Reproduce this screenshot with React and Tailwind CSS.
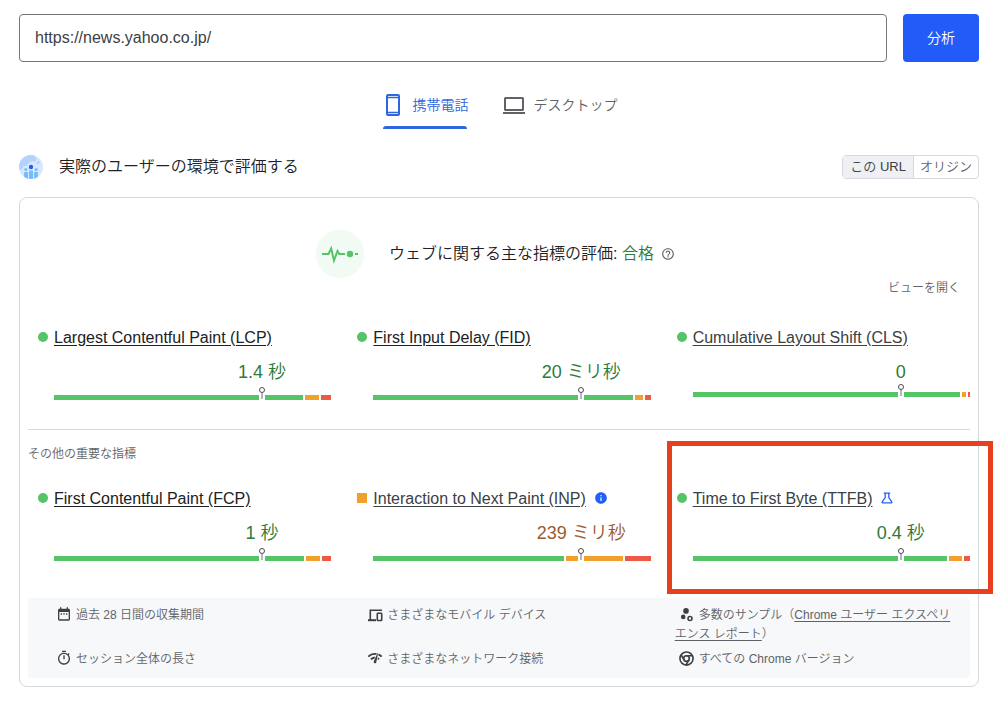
import { MdDateRange, MdOutlineTimer, MdNetworkCheck, MdHelpOutline, MdInfo } from "react-icons/md";

function PhoneIcon() {
  return (
    <svg width="24" height="24" viewBox="0 0 24 24" fill="none" stroke="currentColor" aria-hidden="true">
      <rect x="6" y="2" width="12" height="20" rx="1" strokeWidth="2" />
      <path d="M6 4.500h12M6 19.500h12" strokeWidth="1.600" />
    </svg>
  );
}

function LaptopIcon() {
  return (
    <svg width="24" height="24" viewBox="0 0 24 24" fill="none" stroke="currentColor" strokeWidth="2" aria-hidden="true">
      <rect x="3" y="5" width="18" height="12" rx="0.500" />
      <path d="M1 20h22" />
    </svg>
  );
}

function GlobeUsersIcon() {
  return (
    <svg width="24" height="24" viewBox="0 0 24 24" className="shrink-0" aria-hidden="true">
      <defs>
        <clipPath id="globe">
          <circle cx="12" cy="12" r="12" />
        </clipPath>
      </defs>
      <g clipPath="url(#globe)">
        <rect width="24" height="24" fill="#d7e7fe" />
        <path d="M0 0h16v2.500l2 1.500-2.500 3-2-1-3 1.500-3 3-3 1-2 3H0z" fill="#b3d2fd" />
        <path d="M17 7l3-1 1 2-2 1.500z" fill="#b3d2fd" />
        <g fill="#76bdfb">
          <circle cx="6.800" cy="14.600" r="1.500" />
          <circle cx="17.200" cy="14.600" r="1.500" />
          <rect x="5" y="17" width="4" height="8" rx="1" />
          <rect x="10" y="15.500" width="4" height="9" rx="1" />
          <rect x="15" y="17" width="4" height="8" rx="1" />
        </g>
        <circle cx="12" cy="12" r="2.200" fill="#2160f6" />
      </g>
    </svg>
  );
}

function PulseIcon() {
  return (
    <svg width="48" height="48" viewBox="0 0 48 48" className="shrink-0" aria-hidden="true">
      <circle cx="24" cy="24" r="24" fill="#f1faf3" />
      <path d="M6 24h6.500l2.700-5.500 2.800 12 3.500-9.500 1.800 3H29" fill="none" stroke="#54c466" strokeWidth="2" />
      <circle cx="34" cy="24" r="3.200" fill="#54c466" />
      <path d="M39 24h3" stroke="#54c466" strokeWidth="2" />
    </svg>
  );
}

function FlaskIcon() {
  return (
    <svg width="12" height="12" viewBox="0 0 12 12" fill="none" stroke="#2160f6" strokeWidth="1.300" aria-label="試験運用版" role="img">
      <path d="M2.800 1.200h6.400M4.200 1.200v4.300L1.200 9.800c-.3.500-.1 1 .5 1h8.600c.6 0 .8-.5.500-1L7.800 5.500V1.200" />
    </svg>
  );
}

function DevicesIcon() {
  return (
    <svg width="15" height="13" viewBox="0 0 15 13" fill="none" stroke="currentColor" strokeWidth="1.600" aria-hidden="true">
      <path d="M14 1.300H2.300V11" />
      <path d="M0 11.200h8" strokeWidth="2" />
      <rect x="9.300" y="4.300" width="4.400" height="7.200" rx="0.600" />
    </svg>
  );
}

function SamplesIcon() {
  return (
    <svg width="14" height="14" viewBox="0 0 14 14" fill="currentColor" aria-hidden="true">
      <circle cx="6" cy="2.900" r="2.800" />
      <circle cx="3.200" cy="8.900" r="2.300" />
      <circle cx="10" cy="10.500" r="2" fill="none" stroke="currentColor" strokeWidth="1.600" />
    </svg>
  );
}

function ChromeIcon() {
  return (
    <svg width="15" height="15" viewBox="0 0 24 24" fill="none" stroke="currentColor" strokeWidth="2.600" aria-hidden="true">
      <circle cx="12" cy="12" r="10.500" />
      <circle cx="12" cy="12" r="4.500" />
      <path d="M12 7.500h9.500M15.900 14.250L11 22.500M8.100 14.250L3.200 6" />
    </svg>
  );
}

function StatusMark({ status }) {
  return status === "good" ? (
    <span className="size-2.5 shrink-0 rounded-full bg-[#54c466]" />
  ) : (
    <span className="size-2.5 shrink-0 bg-[#f0a02b]" />
  );
}

function Metric({ name, href, value, unit, status = "good", visited, segments, badge, highlighted }) {
  const [good, average, poor] = segments;
  return (
    <div className="relative pl-2.5">
      <div className="flex h-6 items-center gap-1.5">
        <StatusMark status={status} />
        <a
          href={href}
          className={
            visited
              ? "whitespace-nowrap pt-px text-base text-[#202124] underline underline-offset-2"
              : "whitespace-nowrap pt-px text-base text-[#3c4043] underline underline-offset-2"
          }
        >
          {name}
        </a>
        {badge && <span className="ml-0.5">{badge}</span>}
      </div>
      <div className="pl-4">
        <div
          className={
            status === "good"
              ? "ml-[50%] mt-[11px] whitespace-nowrap text-center text-lg/6 text-[#2e7a3a]"
              : "ml-[50%] mt-[11px] whitespace-nowrap text-center text-lg/6 text-[#9a5b30]"
          }
        >
          {value}
          {unit && ` ${unit}`}
        </div>
        <div className={unit ? "relative mt-[11px]" : "relative mt-2"}>
          <div className="flex h-[5px] gap-0.5">
            <span className="bg-[#54c466]" style={{ flexGrow: good }} />
            <span className="bg-[#f0a02b]" style={{ flexGrow: average }} />
            <span className="bg-[#ec5a44]" style={{ flexGrow: poor }} />
          </div>
          <svg className="absolute -top-2 left-3/4 -ml-[3px]" width="6" height="13" viewBox="0 0 6 13" aria-hidden="true">
            <path d="M0 8h6v5H0z" fill="#fff" />
            <path d="M3 5.500V12" stroke="#9aa0a6" strokeWidth="1.500" />
            <circle cx="3" cy="3" r="2.500" fill="#fff" stroke="#4a4d51" />
          </svg>
        </div>
      </div>
      {highlighted && (
        <div className="pointer-events-none absolute -bottom-[33px] -right-[23px] -top-[45px] left-0 border-[5px] border-[#e8401f]" />
      )}
    </div>
  );
}

function Detail({ icon, children }) {
  return (
    <li className="pr-3">
      <span className="ml-1 mr-1 inline-flex size-4 items-center justify-center align-[-3px] text-[#3c4043]">{icon}</span>
      {children}
    </li>
  );
}

const vitals = [
  { name: "Largest Contentful Paint (LCP)", href: "#lcp", value: "1.4", unit: "秒", visited: true, segments: [249, 14, 10] },
  { name: "First Input Delay (FID)", href: "#fid", value: "20", unit: "ミリ秒", visited: true, segments: [260, 8, 6] },
  { name: "Cumulative Layout Shift (CLS)", href: "#cls", value: "0", segments: [267, 4, 2] },
];

const others = [
  { name: "First Contentful Paint (FCP)", href: "#fcp", value: "1", unit: "秒", visited: true, segments: [250, 14, 9] },
  {
    name: "Interaction to Next Paint (INP)",
    href: "#inp",
    value: "239",
    unit: "ミリ秒",
    status: "average",
    segments: [191, 57, 26],
    badge: <MdInfo size={14} color="#2160f6" />,
  },
  {
    name: "Time to First Byte (TTFB)",
    href: "#ttfb",
    value: "0.4",
    unit: "秒",
    segments: [254, 13, 6],
    badge: <FlaskIcon />,
    highlighted: true,
  },
];

export default function App() {
  return (
    <main
      lang="ja"
      className="min-h-screen bg-white pb-4 pl-[19px] pr-7 pt-3.5 font-['Liberation_Sans','Noto_Sans_CJK_JP',sans-serif] font-[350] text-[#202124]"
    >
      <form className="flex gap-4" onSubmit={(e) => e.preventDefault()}>
        <input
          type="url"
          aria-label="URL"
          defaultValue="https://news.yahoo.co.jp/"
          className="h-12 min-w-0 flex-1 rounded border border-[#74777c] px-[15px] text-base text-[#3c4043]"
        />
        <button type="submit" className="h-12 rounded bg-[#225bf8] px-6 text-sm text-white">
          分析
        </button>
      </form>

      <div role="tablist" className="mt-[31px] flex items-start justify-center gap-[33px] text-sm">
        <button role="tab" aria-selected="true" className="flex flex-col gap-[9px] text-[#2f66dd]">
          <span className="flex items-center gap-2">
            <PhoneIcon />
            携帯電話
          </span>
          <span className="mx-0.5 h-[3px] self-stretch rounded-t-sm bg-[#2f66dd]" />
        </button>
        <button role="tab" aria-selected="false" className="flex items-center gap-2 text-[#5f6368]">
          <LaptopIcon />
          デスクトップ
        </button>
      </div>

      <header className="mt-[26px] flex h-6 items-center">
        <GlobeUsersIcon />
        <h1 className="ml-4 flex-1 text-base font-[350]">実際のユーザーの環境で評価する</h1>
        <div className="flex h-6 rounded-sm border border-[#d5d8dd] text-[13px]">
          <button className="border-r border-[#d5d8dd] bg-[#eff0f3] px-[7px] text-[#3c4043]">この URL</button>
          <button className="px-1.5 text-[#5f6368]">オリジン</button>
        </div>
      </header>

      <section className="mt-[18px] rounded-lg border border-[#d5d8dd] px-2 pb-2 pt-8">
        <div className="flex items-center justify-center">
          <PulseIcon />
          <h2 className="ml-[25px] text-base">
            ウェブに関する主な指標の評価: <span className="text-[#2e7a3a]">合格</span>
          </h2>
          <button aria-label="ヘルプ" className="mx-[7px] text-[#5f6368]">
            <MdHelpOutline size={14} />
          </button>
        </div>
        <div className="flex justify-end pr-2.5 pt-px">
          <button className="text-xs/[18px] text-[#5f6368]">ビューを開く</button>
        </div>

        <div className="mt-7 grid grid-cols-3 gap-4">
          {vitals.map((m) => (
            <Metric key={m.name} {...m} />
          ))}
        </div>

        <hr className="mt-[29px] border-[#d5d8dd]" />
        <h3 className="mt-[15px] text-xs/[18px] text-[#5f6368]">その他の重要な指標</h3>
        <div className="mt-[23px] grid grid-cols-3 gap-4">
          {others.map((m) => (
            <Metric key={m.name} {...m} />
          ))}
        </div>

        <ul className="mt-[37px] grid grid-cols-3 gap-x-4 gap-y-1.5 rounded bg-[#f7f8fa] pb-[9px] pl-6 pt-2 text-xs/[19px] text-[#5f6368]">
          <Detail icon={<MdDateRange size={16} />}>過去 28 日間の収集期間</Detail>
          <Detail icon={<DevicesIcon />}>さまざまなモバイル デバイス</Detail>
          <Detail icon={<SamplesIcon />}>
            多数のサンプル（
            <a href="#crux" className="underline underline-offset-2">
              Chrome ユーザー エクスペリエンス レポート
            </a>
            ）
          </Detail>
          <Detail icon={<MdOutlineTimer size={16} />}>セッション全体の長さ</Detail>
          <Detail icon={<MdNetworkCheck size={16} />}>さまざまなネットワーク接続</Detail>
          <Detail icon={<ChromeIcon />}>すべての Chrome バージョン</Detail>
        </ul>
      </section>
    </main>
  );
}
